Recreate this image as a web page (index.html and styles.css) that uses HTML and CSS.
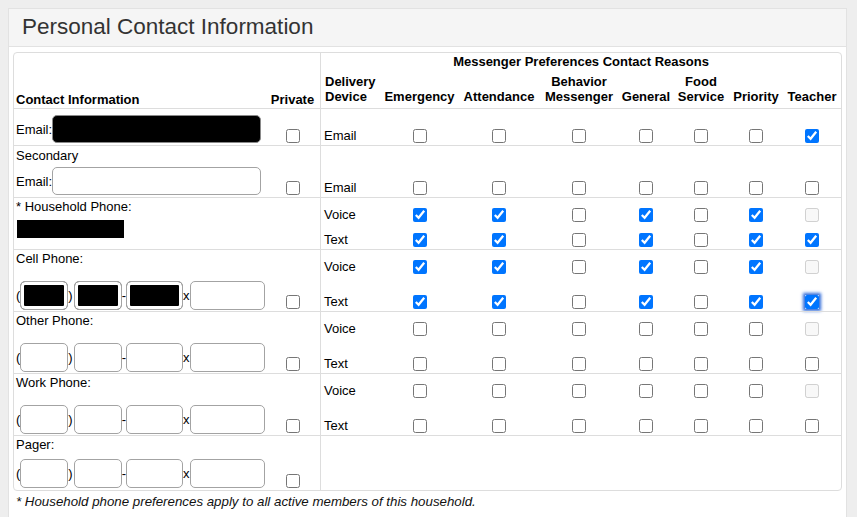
FILE: index.html
```html
<!DOCTYPE html>
<html>
<head>
<meta charset="utf-8">
<title>Personal Contact Information</title>
<link rel="stylesheet" href="styles.css">
</head>
<body>
<div class="panel">
  <div class="panel-head"><h1>Personal Contact Information</h1></div>
  <div class="panel-body">
    <div class="grid-box">
      <table class="contacts">
        <colgroup>
          <col class="c-info"><col class="c-priv"><col class="c-dev"><col class="c-emg"><col class="c-att"><col class="c-beh"><col class="c-gen"><col class="c-food"><col class="c-pri"><col class="c-tea">
        </colgroup>
        <thead>
          <tr class="h1">
            <th rowspan="2" class="th-info">Contact Information</th>
            <th rowspan="2" class="th-priv">Private</th>
            <th colspan="8" class="th-title">Messenger Preferences Contact Reasons</th>
          </tr>
          <tr class="h2">
            <th class="th-dev">Delivery<br>Device</th>
            <th>Emergency</th>
            <th>Attendance</th>
            <th>Behavior<br>Messenger</th>
            <th>General</th>
            <th>Food<br>Service</th>
            <th>Priority</th>
            <th>Teacher</th>
          </tr>
        </thead>
        <tbody>
          <tr class="grp single r-email">
            <td class="info"><span class="lbl">Email:</span><input type="text" class="txt email redact"></td>
            <td class="priv"><input type="checkbox"></td>
            <td class="dev">Email</td>
            <td class="cb"><input type="checkbox"></td>
            <td class="cb"><input type="checkbox"></td>
            <td class="cb"><input type="checkbox"></td>
            <td class="cb"><input type="checkbox"></td>
            <td class="cb"><input type="checkbox"></td>
            <td class="cb"><input type="checkbox"></td>
            <td class="cb"><input type="checkbox" checked></td>
          </tr>
          <tr class="grp single r-sec">
            <td class="info"><div class="lbl-line sec">Secondary</div><span class="lbl">Email:</span><input type="text" class="txt email"></td>
            <td class="priv"><input type="checkbox"></td>
            <td class="dev">Email</td>
            <td class="cb"><input type="checkbox"></td>
            <td class="cb"><input type="checkbox"></td>
            <td class="cb"><input type="checkbox"></td>
            <td class="cb"><input type="checkbox"></td>
            <td class="cb"><input type="checkbox"></td>
            <td class="cb"><input type="checkbox"></td>
            <td class="cb"><input type="checkbox"></td>
          </tr>

          <tr class="grp sub1">
            <td class="info top" rowspan="2"><div class="lbl-line">* Household Phone:</div><span class="redact-block"></span></td>
            <td class="priv" rowspan="2"></td>
            <td class="dev">Voice</td>
            <td class="cb"><input type="checkbox" checked></td>
            <td class="cb"><input type="checkbox" checked></td>
            <td class="cb"><input type="checkbox"></td>
            <td class="cb"><input type="checkbox" checked></td>
            <td class="cb"><input type="checkbox"></td>
            <td class="cb"><input type="checkbox" checked></td>
            <td class="cb"><input type="checkbox" disabled></td>
          </tr>
          <tr class="sub2 short">
            <td class="dev">Text</td>
            <td class="cb"><input type="checkbox" checked></td>
            <td class="cb"><input type="checkbox" checked></td>
            <td class="cb"><input type="checkbox"></td>
            <td class="cb"><input type="checkbox" checked></td>
            <td class="cb"><input type="checkbox"></td>
            <td class="cb"><input type="checkbox" checked></td>
            <td class="cb"><input type="checkbox" checked></td>
          </tr>

          <tr class="grp sub1">
            <td class="info top" rowspan="2"><div class="lbl-line">Cell Phone:</div>
              <div class="phone wide-gap"><span class="p">(</span><input type="text" class="txt ph1 redact-in"><span class="p">)</span><input type="text" class="txt ph2 redact-in"><span class="p">-</span><input type="text" class="txt ph3 redact-in"><span class="p x">x</span><input type="text" class="txt ph4"></div></td>
            <td class="priv" rowspan="2"><input type="checkbox"></td>
            <td class="dev">Voice</td>
            <td class="cb"><input type="checkbox" checked></td>
            <td class="cb"><input type="checkbox" checked></td>
            <td class="cb"><input type="checkbox"></td>
            <td class="cb"><input type="checkbox" checked></td>
            <td class="cb"><input type="checkbox"></td>
            <td class="cb"><input type="checkbox" checked></td>
            <td class="cb"><input type="checkbox" disabled></td>
          </tr>
          <tr class="sub2 tall">
            <td class="dev">Text</td>
            <td class="cb"><input type="checkbox" checked></td>
            <td class="cb"><input type="checkbox" checked></td>
            <td class="cb"><input type="checkbox"></td>
            <td class="cb"><input type="checkbox" checked></td>
            <td class="cb"><input type="checkbox"></td>
            <td class="cb"><input type="checkbox" checked></td>
            <td class="cb"><input type="checkbox" class="focused" checked></td>
          </tr>

          <tr class="grp sub1">
            <td class="info top" rowspan="2"><div class="lbl-line">Other Phone:</div>
              <div class="phone wide-gap"><span class="p">(</span><input type="text" class="txt ph1"><span class="p">)</span><input type="text" class="txt ph2"><span class="p">-</span><input type="text" class="txt ph3"><span class="p x">x</span><input type="text" class="txt ph4"></div></td>
            <td class="priv" rowspan="2"><input type="checkbox"></td>
            <td class="dev">Voice</td>
            <td class="cb"><input type="checkbox"></td>
            <td class="cb"><input type="checkbox"></td>
            <td class="cb"><input type="checkbox"></td>
            <td class="cb"><input type="checkbox"></td>
            <td class="cb"><input type="checkbox"></td>
            <td class="cb"><input type="checkbox"></td>
            <td class="cb"><input type="checkbox" disabled></td>
          </tr>
          <tr class="sub2 tall">
            <td class="dev">Text</td>
            <td class="cb"><input type="checkbox"></td>
            <td class="cb"><input type="checkbox"></td>
            <td class="cb"><input type="checkbox"></td>
            <td class="cb"><input type="checkbox"></td>
            <td class="cb"><input type="checkbox"></td>
            <td class="cb"><input type="checkbox"></td>
            <td class="cb"><input type="checkbox"></td>
          </tr>

          <tr class="grp sub1">
            <td class="info top" rowspan="2"><div class="lbl-line">Work Phone:</div>
              <div class="phone wide-gap"><span class="p">(</span><input type="text" class="txt ph1"><span class="p">)</span><input type="text" class="txt ph2"><span class="p">-</span><input type="text" class="txt ph3"><span class="p x">x</span><input type="text" class="txt ph4"></div></td>
            <td class="priv" rowspan="2"><input type="checkbox"></td>
            <td class="dev">Voice</td>
            <td class="cb"><input type="checkbox"></td>
            <td class="cb"><input type="checkbox"></td>
            <td class="cb"><input type="checkbox"></td>
            <td class="cb"><input type="checkbox"></td>
            <td class="cb"><input type="checkbox"></td>
            <td class="cb"><input type="checkbox"></td>
            <td class="cb"><input type="checkbox" disabled></td>
          </tr>
          <tr class="sub2 tall">
            <td class="dev">Text</td>
            <td class="cb"><input type="checkbox"></td>
            <td class="cb"><input type="checkbox"></td>
            <td class="cb"><input type="checkbox"></td>
            <td class="cb"><input type="checkbox"></td>
            <td class="cb"><input type="checkbox"></td>
            <td class="cb"><input type="checkbox"></td>
            <td class="cb"><input type="checkbox"></td>
          </tr>

          <tr class="grp r-pager">
            <td class="info top pager"><div class="lbl-line">Pager:</div>
              <div class="phone small-gap"><span class="p">(</span><input type="text" class="txt ph1"><span class="p">)</span><input type="text" class="txt ph2"><span class="p">-</span><input type="text" class="txt ph3"><span class="p x">x</span><input type="text" class="txt ph4"></div></td>
            <td class="priv"><input type="checkbox"></td>
            <td class="dev empty" colspan="8"></td>
          </tr>
        </tbody>
      </table>
    </div>
    <p class="note">* Household phone preferences apply to all active members of this household.</p>
  </div>
</div>
</body>
</html>
```

FILE: styles.css
```css
* {
  box-sizing: border-box;
}

body {
  margin: 8px;
  background: #eeeeee;
  font-family: "Liberation Sans", Arial, sans-serif;
  font-size: 13px;
  color: #000;
}

.panel {
  width: 839px;
  background: #fff;
  border: 1px solid #e2e2e2;
  padding-bottom: 40px;
}

.panel-head {
  height: 38px;
  background: #f5f5f5;
  border-bottom: 1px solid #e2e2e2;
  display: flex;
  align-items: center;
  padding-left: 13px;
}

.panel-head h1 {
  margin: 0;
  font-size: 22.5px;
  font-weight: normal;
  color: #333;
  line-height: 1;
}

.panel-body {
  padding: 5px 4px 0 4px;
}

.grid-box {
  border: 1px solid #dddddd;
  border-radius: 4px;
}

.contacts {
  width: 100%;
  table-layout: fixed;
  border-collapse: separate;
  border-spacing: 0;
}

.c-info { width: 251px; }
.c-priv { width: 55px; }
.c-dev { width: 60px; }
.c-emg { width: 79px; }
.c-att { width: 80px; }
.c-beh { width: 80px; }
.c-gen { width: 54px; }
.c-food { width: 56px; }
.c-pri { width: 54px; }
.c-tea { width: 58px; }

.contacts th,
.contacts td {
  padding: 0;
  line-height: 15px;
}

.contacts th {
  font-weight: bold;
  font-size: 13px;
}

.h1 {
  height: 17px;
}

.th-title {
  text-align: center;
  vertical-align: middle;
  border-left: 1px solid #dddddd;
}

.h2 {
  height: 38px;
}

.h2 th {
  vertical-align: bottom;
  text-align: center;
  padding-bottom: 4px;
}

.h2 th.th-dev {
  text-align: left;
  padding-left: 4px;
  border-left: 1px solid #dddddd;
}

.th-info {
  text-align: left;
  vertical-align: bottom;
  padding: 0 0 1px 2px !important;
}

.th-priv {
  text-align: center;
  vertical-align: bottom;
  padding-bottom: 1px !important;
}

.grp > td {
  border-top: 1px solid #dddddd;
}

.r-email { height: 37px; }
.r-sec { height: 52px; }
.sub1 { height: 34px; }
.sub2.short { height: 18px; }
.sub2.tall { height: 28px; }
.r-pager { height: 55px; }

.single > td,
.sub2 > td {
  vertical-align: bottom;
  padding-bottom: 2px;
}

.sub1 > td {
  vertical-align: middle;
}

.contacts td.info {
  padding-left: 2px;
}

.contacts td.info.top {
  vertical-align: top;
  padding-top: 1px;
}

.contacts td.info.pager {
  padding-top: 1px;
}

.contacts td.priv {
  vertical-align: bottom;
  padding-bottom: 2px;
}

.contacts td.dev {
  padding-left: 3px;
  border-left: 1px solid #dddddd;
}

.cb {
  text-align: center;
}

.contacts input[type="checkbox"] {
  display: block;
  width: 14px;
  height: 14px;
  margin: 0 auto;
}

.contacts input.focused {
  box-shadow: 0 0 3px 2px rgba(10, 80, 210, 0.85);
}

.lbl-line {
  height: 15px;
}

.lbl-line.sec {
  margin-bottom: 4px;
}

.lbl {
  vertical-align: middle;
}

.txt {
  font: inherit;
  border: 1px solid #a3a3a3;
  border-radius: 5px;
  background: #fff;
  height: 29px;
  padding: 0 3px;
  margin: 0;
  vertical-align: middle;
}

.email {
  width: 209px;
  height: 28px;
}

.redact {
  background: #000;
  border-color: #8a8a8a;
}

.redact-in {
  background: #000;
  box-shadow: inset 0 0 0 3px #fff;
}

.redact-block {
  display: block;
  width: 107px;
  height: 18px;
  margin-top: 6px;
  margin-left: 1px;
  background: #000;
}

.phone {
  display: flex;
  align-items: center;
}

.phone.wide-gap {
  margin-top: 15px;
}

.phone.small-gap {
  margin-top: 7px;
}

.phone .p {
  display: inline-block;
  line-height: 15px;
}

.ph1 { width: 48px; }
.ph2 { width: 48px; margin-left: 1px; }
.ph3 { width: 57px; }
.ph4 { width: 75px; }

.note {
  margin: 3px 0 0 3px;
  font-size: 13.3px;
  font-style: italic;
  line-height: 15px;
  color: #111;
}
```
